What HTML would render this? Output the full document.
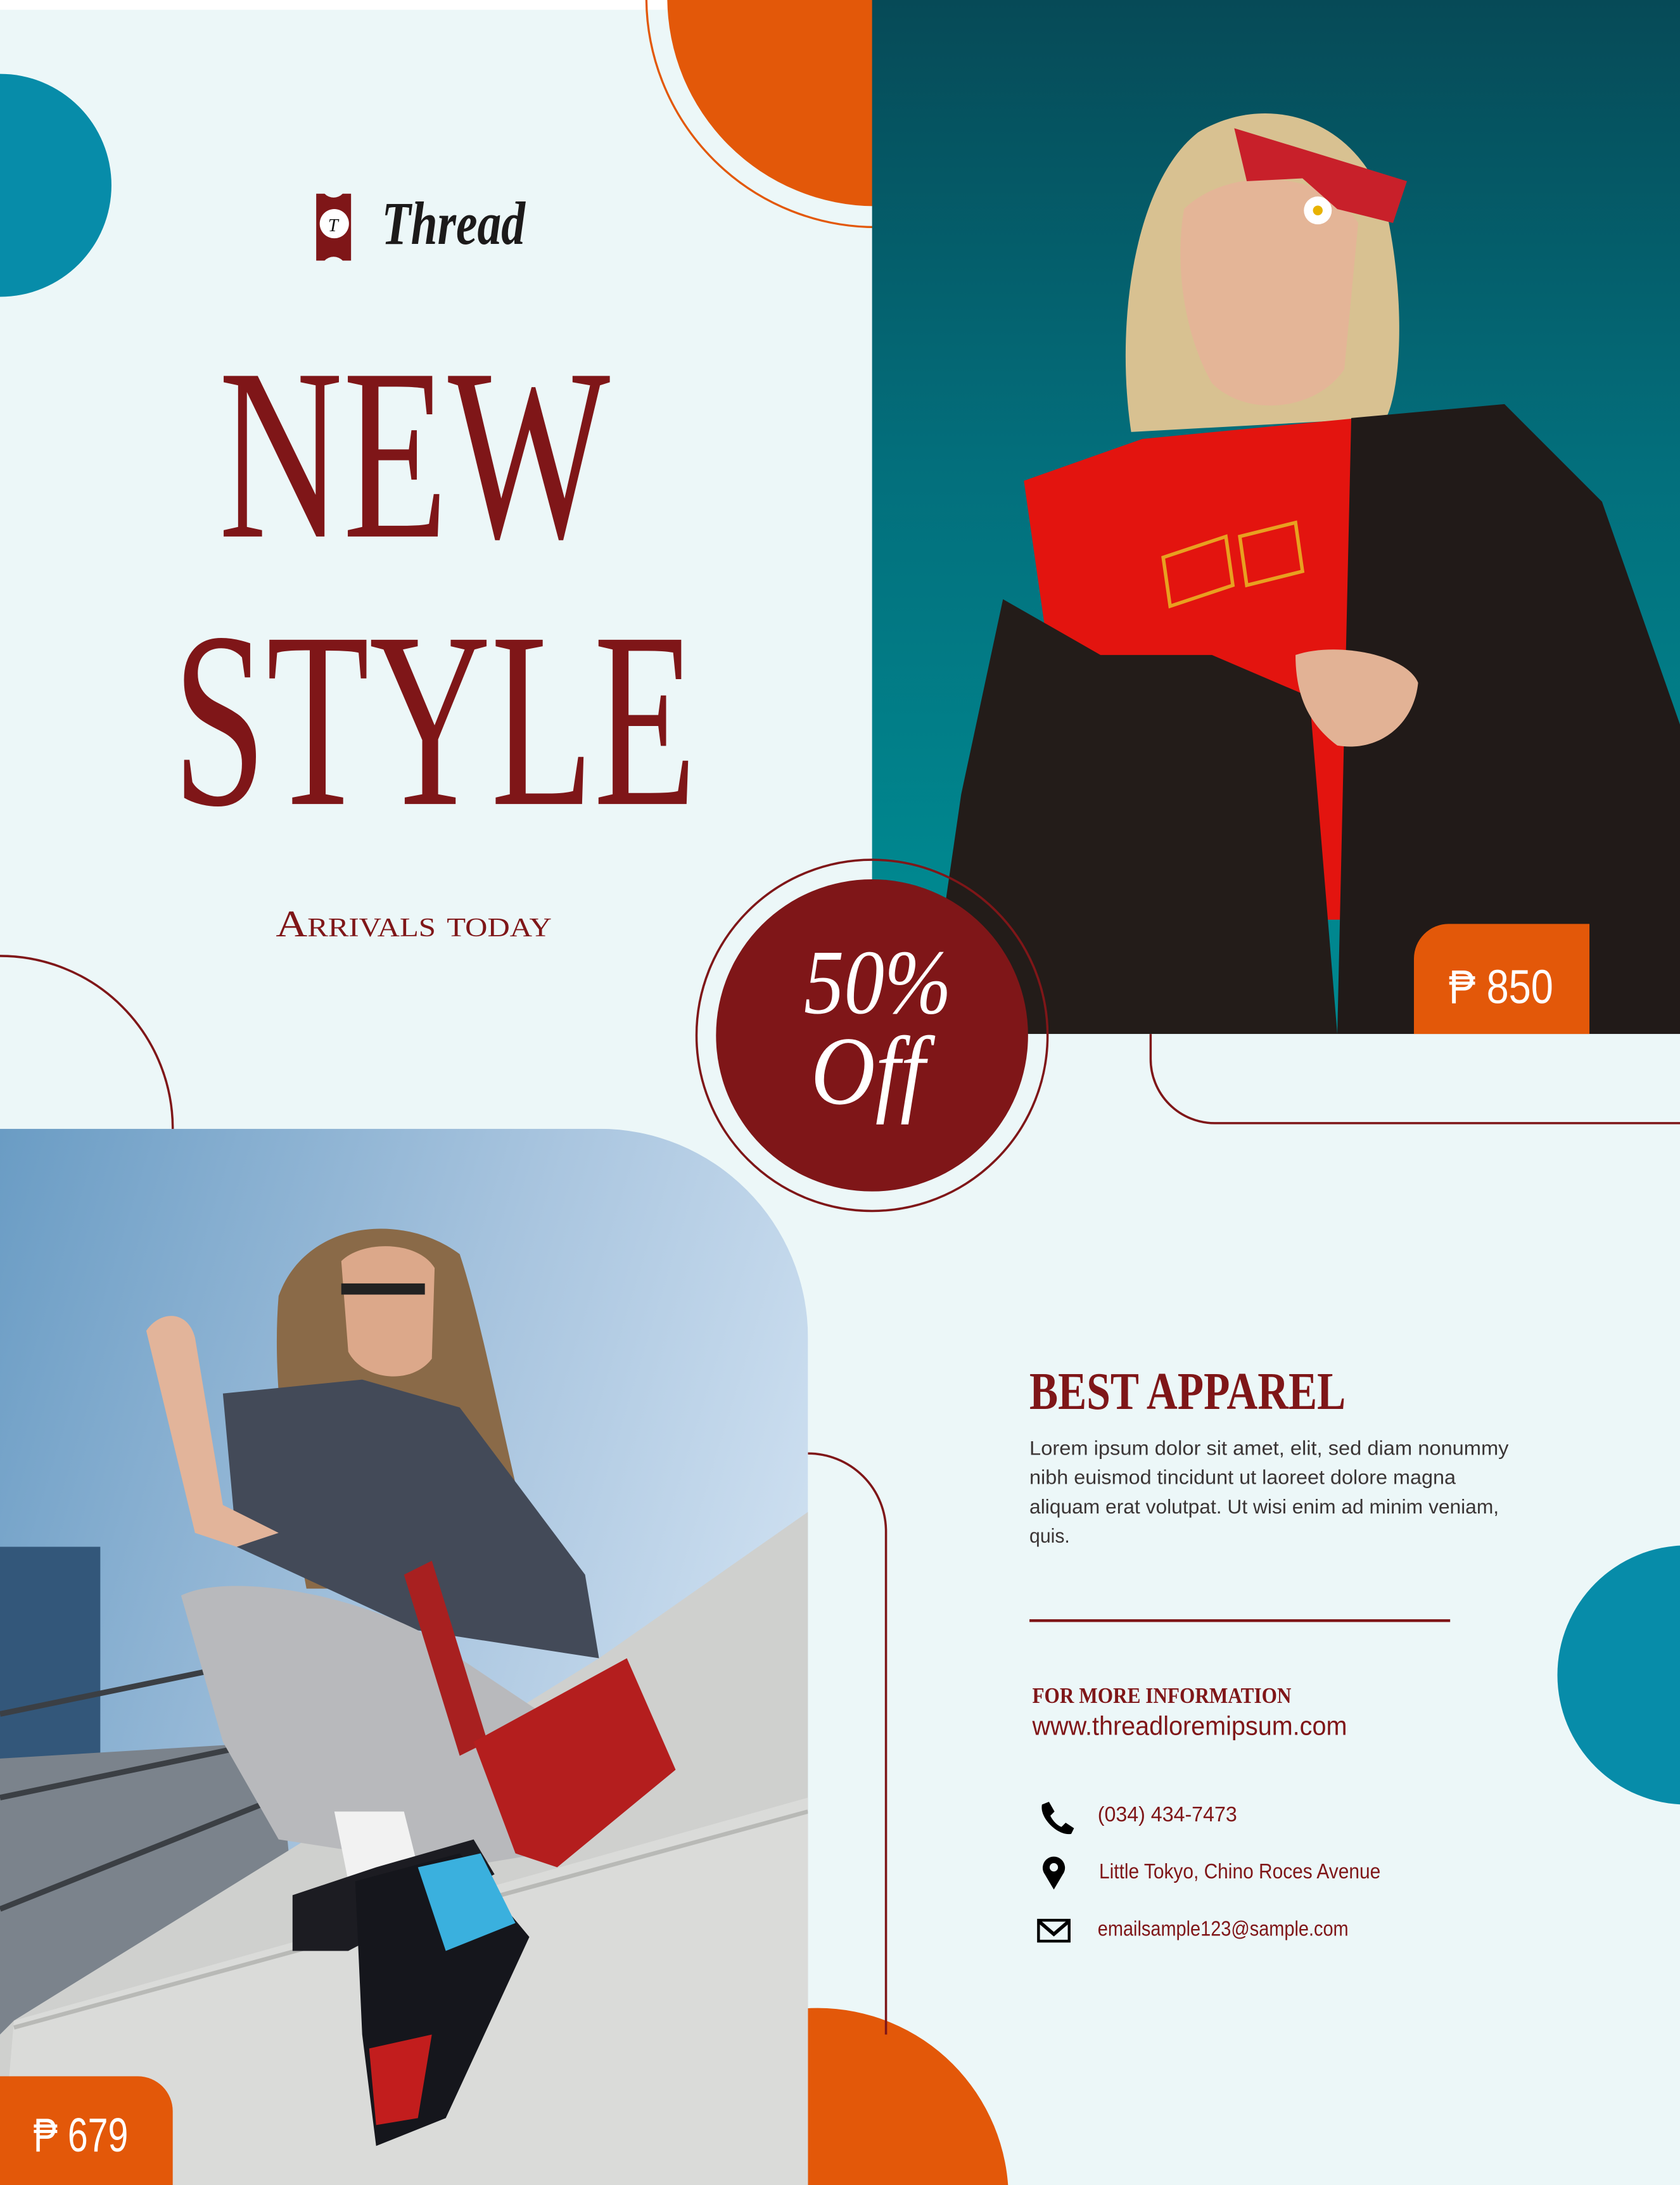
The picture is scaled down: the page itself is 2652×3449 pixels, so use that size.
<!DOCTYPE html>
<html><head><meta charset="utf-8"><style>
html,body{margin:0;padding:0;background:#ecf7f8;width:2652px;height:3449px;overflow:hidden;}
svg{display:block}
</style></head><body>
<svg width="2652" height="3449" viewBox="0 0 1206 1568" preserveAspectRatio="none" xmlns="http://www.w3.org/2000/svg">
<defs>
<linearGradient id="sky1" x1="0" y1="0" x2="0" y2="1">
<stop offset="0" stop-color="#064a57"/><stop offset="0.45" stop-color="#036f7c"/><stop offset="0.85" stop-color="#00878f"/></linearGradient>
<linearGradient id="sky2" x1="0" y1="0" x2="1" y2="0.4">
<stop offset="0" stop-color="#6a9cc4"/><stop offset="0.6" stop-color="#a9c5df"/><stop offset="1" stop-color="#cddff0"/></linearGradient>
<clipPath id="c1"><rect x="626" y="0" width="580" height="742"/></clipPath>
<clipPath id="c2"><path d="M0,810 H430 A150,150 0 0 1 580,960 V1568 H0 Z"/></clipPath>
</defs>
<rect width="1206" height="1568" fill="#ecf7f8"/>
<rect x="0" y="0" width="1206" height="7" fill="#ffffff"/>
<circle cx="0" cy="133" r="80" fill="#078ca9"/>
<circle cx="629" cy="-2" r="165" fill="none" stroke="#e35809" stroke-width="1.5"/>
<circle cx="629" cy="-2" r="150" fill="#e35809"/>
<circle cx="0" cy="810" r="124" fill="none" stroke="#7f1618" stroke-width="1.6"/>
<circle cx="1211" cy="1202" r="93" fill="#078ca9"/>
<circle cx="587" cy="1578" r="137" fill="#e35809"/>
<path d="M580,1043 A56,56 0 0 1 636,1099 V1460" fill="none" stroke="#7f1618" stroke-width="1.6"/>
<path d="M826,742 V760 A46,46 0 0 0 872,806 H1206" fill="none" stroke="#7f1618" stroke-width="1.6"/>

<!-- top photo -->
<g clip-path="url(#c1)">
<rect x="626" y="0" width="580" height="742" fill="url(#sky1)"/>
<path d="M812,310 C800,230 815,130 860,95 C910,65 975,85 995,150 C1010,220 1005,280 995,300 Z" fill="#d8c191"/>
<path d="M850,150 C880,120 950,120 975,160 L965,265 C945,295 895,300 870,275 C850,240 843,190 850,150 Z" fill="#e4b597"/>
<path d="M886,92 L945,110 L1010,130 L1000,160 L960,150 L935,128 L895,130 Z" fill="#c8202a"/>
<circle cx="946" cy="151" r="10" fill="#ffffff"/><circle cx="946" cy="151" r="3.5" fill="#e8b200"/>
<path d="M735,345 L820,315 L975,300 L975,660 L790,660 L760,520 Z" fill="#e3140f"/>
<path d="M970,300 L1080,290 L1150,360 L1206,520 L1206,742 L960,742 Z" fill="#211a18"/>
<path d="M720,430 L790,470 L870,470 L940,500 L960,742 L665,742 L690,570 Z" fill="#231c19"/>
<path d="M930,470 C960,460 1010,470 1018,490 C1015,520 990,540 960,535 C940,520 930,500 930,470 Z" fill="#e2b295"/>
<path d="M835,400 L880,385 L885,420 L840,435 Z M890,385 L930,375 L935,410 L895,420 Z" fill="none" stroke="#e8a020" stroke-width="2.5"/>
</g>

<!-- bottom photo -->
<g clip-path="url(#c2)">
<rect x="0" y="810" width="580" height="758" fill="url(#sky2)"/>
<rect x="0" y="1110" width="72" height="160" fill="#33577a"/>
<path d="M0,1262 L200,1250 L220,1470 L0,1500 Z" fill="#7b838c"/>
<path d="M0,1230 L170,1195 M0,1290 L240,1240 M0,1370 L200,1290" stroke="#3b3f44" stroke-width="4"/>
<path d="M10,1450 L430,1190 L580,1085 L580,1568 L0,1568 L0,1460 Z" fill="#cfd0ce"/>
<path d="M10,1450 L580,1290 L580,1568 L0,1568 Z" fill="#dadbd9"/>
<path d="M10,1455 L580,1300" stroke="#b8b9b6" stroke-width="3"/>
<path d="M200,930 C220,875 290,870 330,900 C350,960 370,1080 390,1140 L220,1140 C205,1060 195,990 200,930 Z" fill="#8a6a48"/>
<path d="M245,905 C260,890 300,890 312,910 L310,975 C295,995 260,990 250,970 Z" fill="#dca88a"/>
<path d="M245,925 h60" stroke="#222" stroke-width="8"/>
<path d="M160,1000 L260,990 L330,1010 L420,1130 L430,1190 L300,1170 L170,1110 Z" fill="#434a58"/>
<path d="M105,955 C115,940 135,940 140,960 L160,1080 L200,1100 L170,1110 L140,1100 Z" fill="#e2b49a"/>
<path d="M130,1145 C160,1130 240,1140 300,1170 L390,1230 L390,1330 L330,1340 L200,1320 L160,1250 Z" fill="#b8b9bc"/>
<path d="M290,1130 L310,1120 L350,1250 L330,1260 Z" fill="#a82020"/>
<path d="M340,1250 L450,1190 L485,1270 L400,1340 L370,1330 Z" fill="#b41e1e"/>
<path d="M240,1300 L290,1300 L300,1340 L250,1350 Z" fill="#f2f2f2"/>
<path d="M210,1360 L270,1340 L340,1320 L355,1345 L250,1400 L210,1400 Z" fill="#1c1c22"/>
<path d="M255,1350 L330,1330 L380,1390 L320,1520 L270,1540 L260,1460 Z" fill="#15161c"/>
<path d="M300,1340 L345,1330 L370,1380 L320,1400 Z" fill="#3ab0de"/>
<path d="M265,1470 L310,1460 L300,1520 L270,1525 Z" fill="#c21d1d"/>
</g>

<!-- 50% circle -->
<circle cx="626" cy="743" r="126" fill="none" stroke="#7f1618" stroke-width="1.6"/>
<circle cx="626" cy="743" r="112" fill="#7f1618"/>
<text x="577" y="727" font-family="Liberation Serif, serif" font-style="italic" font-size="66" fill="#ffffff" textLength="106" lengthAdjust="spacingAndGlyphs">50%</text>
<text x="582" y="792" font-family="Liberation Serif, serif" font-style="italic" font-size="70" fill="#ffffff" textLength="82" lengthAdjust="spacingAndGlyphs">Off</text>

<!-- price tags -->
<path d="M1015,742 V688 A25,25 0 0 1 1040,663 H1141 V742 Z" fill="#e35809"/>
<text x="1040" y="720" font-family="Liberation Sans Narrow, Liberation Sans, sans-serif" font-size="34" fill="#ffffff" textLength="75" lengthAdjust="spacingAndGlyphs">₱ 850</text>
<path d="M0,1568 V1490 H99 A25,25 0 0 1 124,1515 V1568 Z" fill="#e35809"/>
<text x="24" y="1544" font-family="Liberation Sans Narrow, Liberation Sans, sans-serif" font-size="34" fill="#ffffff" textLength="68" lengthAdjust="spacingAndGlyphs">₱ 679</text>

<!-- logo -->
<path d="M227,139 H233 A9,9 0 0 0 246,139 H252 V187 H246 A9,9 0 0 0 233,187 H227 Z" fill="#7f1618"/>
<circle cx="240" cy="160.5" r="10.5" fill="#ffffff"/>
<text x="235.5" y="166" font-family="Liberation Serif, serif" font-style="italic" font-size="13" fill="#111">T</text>
<text x="274" y="175" font-family="Liberation Serif, serif" font-style="italic" font-weight="bold" font-size="44" fill="#1c1a1a" textLength="103" lengthAdjust="spacingAndGlyphs">Thread</text>

<!-- headline -->
<g font-family="Liberation Serif, serif" fill="#7f1618">
<text x="157" y="385" font-size="176" textLength="281" lengthAdjust="spacingAndGlyphs">NEW</text>
<text x="124" y="577" font-size="180" textLength="376" lengthAdjust="spacingAndGlyphs">STYLE</text>
<text x="198" y="672" font-size="27" font-variant="small-caps" textLength="198" lengthAdjust="spacingAndGlyphs">Arrivals today</text>
<text x="739" y="1011" font-size="38" font-weight="bold" textLength="227" lengthAdjust="spacingAndGlyphs">BEST APPAREL</text>
<text x="741" y="1222" font-size="16" font-weight="bold" textLength="186" lengthAdjust="spacingAndGlyphs">FOR MORE INFORMATION</text>
</g>
<g font-family="Liberation Sans, sans-serif" font-size="14.5" fill="#3a3535">
<text x="739" y="1044" textLength="344" lengthAdjust="spacingAndGlyphs">Lorem ipsum dolor sit amet,  elit, sed diam nonummy</text>
<text x="739" y="1065" textLength="306" lengthAdjust="spacingAndGlyphs">nibh euismod tincidunt ut laoreet dolore magna</text>
<text x="739" y="1086" textLength="337" lengthAdjust="spacingAndGlyphs">aliquam erat volutpat. Ut wisi enim ad minim veniam,</text>
<text x="739" y="1107" textLength="29" lengthAdjust="spacingAndGlyphs">quis.</text>
</g>
<rect x="739" y="1162" width="302" height="2" fill="#7f1618"/>
<g font-family="Liberation Sans, sans-serif" fill="#7f1618">
<text x="741" y="1245" font-size="19" textLength="226" lengthAdjust="spacingAndGlyphs">www.threadloremipsum.com</text>
<text x="788" y="1307" font-size="15" textLength="100" lengthAdjust="spacingAndGlyphs">(034) 434-7473</text>
<text x="789" y="1348" font-size="15" textLength="202" lengthAdjust="spacingAndGlyphs">Little Tokyo, Chino Roces Avenue</text>
<text x="788" y="1389" font-size="15" textLength="180" lengthAdjust="spacingAndGlyphs">emailsample123@sample.com</text>
</g>
<!-- icons -->
<path d="M748,1295 L753,1293 L757,1300 L754,1303 C756,1307 759,1310 762,1311 L765,1308 L771,1312 L769,1316 C760,1318 746,1305 748,1295 Z" fill="#000"/>
<path d="M756.5,1356 L750,1345 A8,8 0 1 1 763,1345 Z" fill="#000"/>
<circle cx="756.5" cy="1340" r="3" fill="#ecf7f8"/>
<rect x="745.5" y="1378" width="22" height="15" fill="none" stroke="#000" stroke-width="2"/>
<path d="M746,1379 L756.5,1388 L767,1379" fill="none" stroke="#000" stroke-width="2.5"/>
</svg>
</body></html>
